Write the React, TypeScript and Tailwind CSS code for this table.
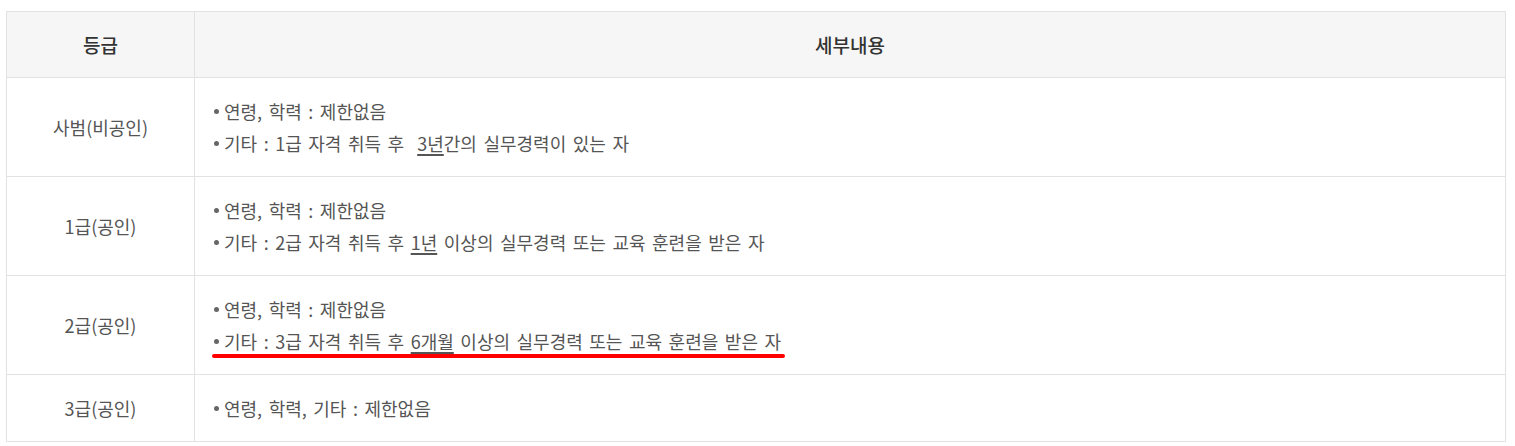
import React from "react";

const font = {
  fontFamily: '"Noto Sans CJK KR", "Noto Sans", sans-serif',
};

function U({ children }: { children: React.ReactNode }) {
  return <span className="underline decoration-[#555] decoration-[2px] underline-offset-[3px]">{children}</span>;
}

function Line({ children }: { children: React.ReactNode }) {
  return (
    <div className="flex items-center">
      <span className="mr-[5px] inline-block h-[5px] w-[5px] rounded-full bg-[#666]" />
      <span>{children}</span>
    </div>
  );
}

export default function App() {
  const rows: { grade: string; lines: React.ReactNode[]; mark?: boolean }[] = [
    {
      grade: "사범(비공인)",
      lines: [
        "연령, 학력 : 제한없음",
        <>
          기타 : 1급 자격 취득 후&nbsp; <U>3년</U>간의 실무경력이 있는 자
        </>,
      ],
    },
    {
      grade: "1급(공인)",
      lines: [
        "연령, 학력 : 제한없음",
        <>
          기타 : 2급 자격 취득 후 <U>1년</U> 이상의 실무경력 또는 교육 훈련을 받은 자
        </>,
      ],
    },
    {
      grade: "2급(공인)",
      mark: true,
      lines: [
        "연령, 학력 : 제한없음",
        <>
          기타 : 3급 자격 취득 후 <U>6개월</U> 이상의 실무경력 또는 교육 훈련을 받은 자
        </>,
      ],
    },
    {
      grade: "3급(공인)",
      lines: ["연령, 학력, 기타 : 제한없음"],
    },
  ];

  return (
    <div className="min-h-[446px] bg-white pl-[6px] pt-[11px]" style={font}>
      <table className="w-[1500px] border-collapse text-[18px] leading-[32px] text-[#555] [word-spacing:2.5px]">
        <thead>
          <tr className="bg-[#f6f6f6]">
            <th className="h-[66px] w-[188px] border border-[#e2e2e2] p-0 text-center text-[19px] font-medium text-[#333]">등급</th>
            <th className="h-[66px] border border-[#e2e2e2] p-0 text-center text-[19px] font-medium text-[#333]">세부내용</th>
          </tr>
        </thead>
        <tbody>
          {rows.map((r) => (
            <tr key={r.grade}>
              <td className="border border-[#e2e2e2] py-[17px] text-center">{r.grade}</td>
              <td className="border border-[#e2e2e2] py-[17px] pl-[19px]">
                {r.lines.map((l, i) => (
                  <div key={i} className={r.mark && i === 1 ? "relative w-fit" : ""}>
                    <Line>{l}</Line>
                    {r.mark && i === 1 && (
                      <span className="absolute left-[-2px] right-[-4px] top-[29px] h-[4px] rounded-full bg-[#ff0000]" />
                    )}
                  </div>
                ))}
              </td>
            </tr>
          ))}
        </tbody>
      </table>
    </div>
  );
}
